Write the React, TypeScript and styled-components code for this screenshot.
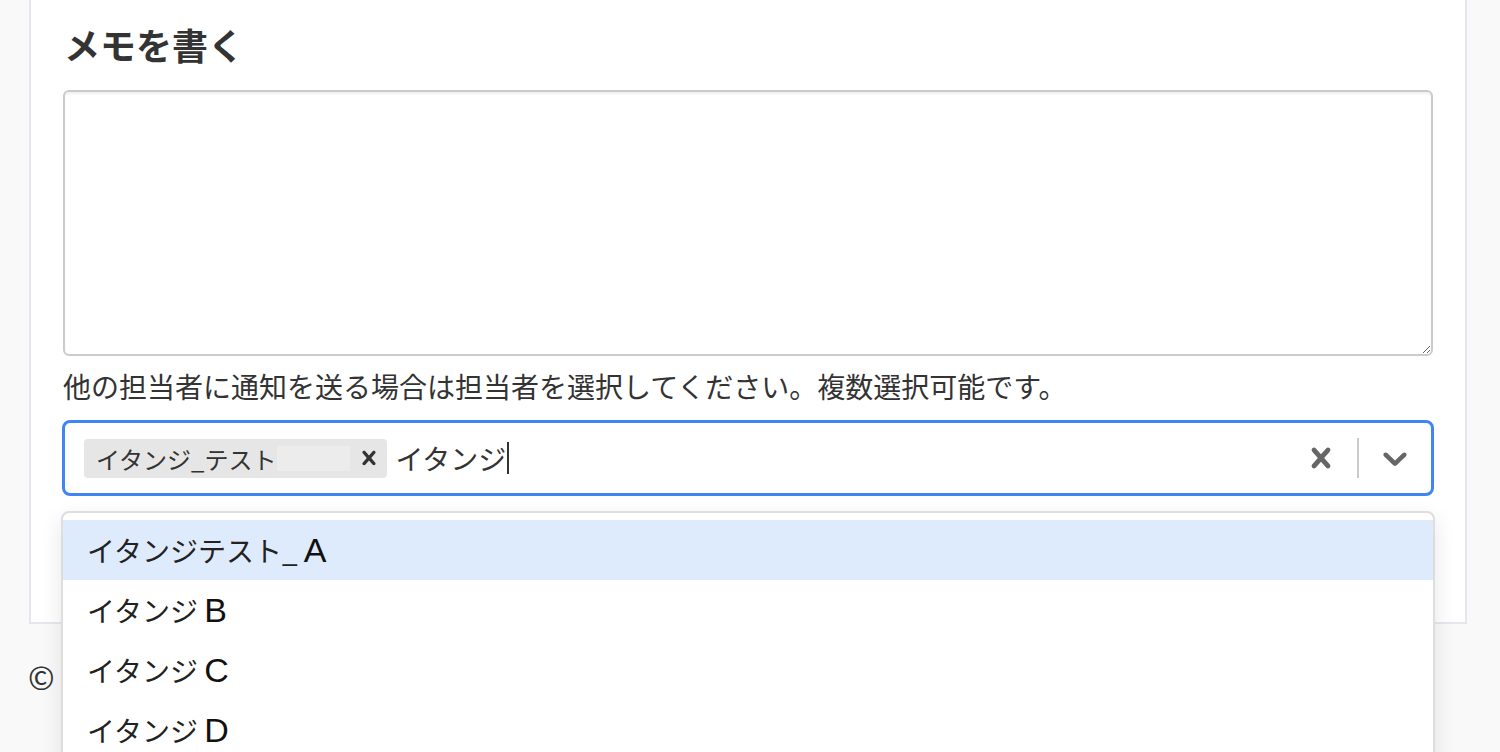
import React from "react";
import styled, { createGlobalStyle } from "styled-components";

const GlobalStyle = createGlobalStyle`
  html, body {
    margin: 0;
    padding: 0;
    background: #f9f9fa;
    font-family: "Noto Sans CJK JP", "Noto Sans", sans-serif;
    color: #333;
    overflow: hidden;
  }
`;

const Page = styled.div`
  height: 752px;
  overflow: hidden;
`;

const Card = styled.section`
  box-sizing: border-box;
  margin-left: 29px;
  width: 1438px;
  background: #fff;
  border: 2px solid #e6e6ec;
  border-top: none;
  padding: 18px 32px 126px;
`;

const Heading = styled.h2`
  margin: 0 0 20px 1px;
  font-size: 36px;
  font-weight: 700;
  line-height: 52px;
  color: #333;
`;

const MemoArea = styled.textarea`
  display: block;
  box-sizing: border-box;
  width: 100%;
  height: 266px;
  margin: 0;
  border: 2px solid #cbcbcb;
  border-radius: 6px;
  box-shadow: inset 0 2px 2px rgba(0, 0, 0, 0.06);
  resize: vertical;
  outline: none;
  font: inherit;
`;

const Hint = styled.p`
  margin: 10px 0 14px;
  font-size: 28px;
  line-height: 40px;
  color: #333;
`;

const SelectWrap = styled.div`
  position: relative;
  margin-left: -1px;
  width: 1372px;
`;

const Control = styled.div`
  box-sizing: border-box;
  display: flex;
  align-items: center;
  min-height: 76px;
  border: 3px solid #3f86f4;
  border-radius: 8px;
  background: #fff;
`;

const ValueContainer = styled.div`
  flex: 1;
  display: flex;
  align-items: center;
  gap: 8px;
  padding: 4px 15px 4px 19px;
`;

const Tag = styled.div`
  display: flex;
  align-items: center;
  height: 39px;
  border-radius: 4px;
  background: #e6e6e6;
`;

const TagLabel = styled.span`
  display: flex;
  align-items: center;
  padding-left: 12px;
  font-size: 24px;
  line-height: 39px;
  color: #333;
`;

const Masked = styled.span`
  display: inline-block;
  width: 73px;
  height: 25px;
  margin-left: 1px;
  background: #ececec;
`;

const TagRemove = styled.span`
  display: flex;
  align-items: center;
  justify-content: center;
  width: 37px;
  height: 39px;
  color: #333;
`;

const Typed = styled.span`
  display: flex;
  align-items: center;
  font-size: 28px;
  line-height: 40px;
  color: #333;
`;

const Caret = styled.span`
  display: inline-block;
  width: 2px;
  height: 32px;
  margin-left: 1px;
  background: #333;
`;

const Indicators = styled.div`
  display: flex;
  align-items: center;
  align-self: stretch;
`;

const IndicatorButton = styled.span`
  display: flex;
  align-items: center;
  justify-content: center;
  padding: 0 16px;
  color: #666;
`;

const Separator = styled.span`
  align-self: center;
  width: 2px;
  height: 40px;
  background: #cccccc;
`;

const Menu = styled.ul`
  position: absolute;
  top: calc(100% + 15px);
  left: -1px;
  right: -1px;
  z-index: 10;
  margin: 0;
  padding: 7px 0 0;
  list-style: none;
  background: #fff;
  border: 2px solid #dedede;
  border-radius: 8px;
  box-shadow: 0 8px 22px rgba(0, 0, 0, 0.1);
`;

const Option = styled.li<{ $active?: boolean }>`
  height: 60px;
  display: flex;
  align-items: center;
  padding: 0 24px;
  font-size: 28px;
  color: #222;
  white-space: pre;
  background: ${(p) => (p.$active ? "#deebfc" : "#fff")};
`;

// the trailing letter of each name is set larger, in a Latin face
const Letter = styled.span`
  font-family: "Liberation Sans", Arial, sans-serif;
  font-size: 34px;
  line-height: 1;
  color: #111;
`;

const Footer = styled.footer`
  padding: 32px 28px;
  font-size: 32px;
  line-height: 40px;
  color: #333;
`;

const CrossIcon = ({ size }: { size: number }) => (
  <svg width={size} height={size} viewBox="0 0 20 20" fill="currentColor">
    <path d="M14.348 14.849c-0.469 0.469-1.229 0.469-1.697 0l-2.651-3.030-2.651 3.029c-0.469 0.469-1.229 0.469-1.697 0-0.469-0.469-0.469-1.229 0-1.697l2.758-3.15-2.759-3.152c-0.469-0.469-0.469-1.228 0-1.697s1.228-0.469 1.697 0l2.652 3.031 2.651-3.031c0.469-0.469 1.228-0.469 1.697 0s0.469 1.229 0 1.697l-2.758 3.152 2.758 3.15c0.469 0.469 0.469 1.229 0 1.698z" />
  </svg>
);

const ChevronIcon = ({ size }: { size: number }) => (
  <svg width={size} height={size} viewBox="0 0 20 20" fill="currentColor">
    <path d="M4.516 7.548c0.436-0.446 1.043-0.481 1.576 0l3.908 3.747 3.908-3.747c0.533-0.481 1.141-0.446 1.574 0 0.436 0.445 0.408 1.197 0 1.615-0.406 0.418-4.695 4.502-4.695 4.502-0.217 0.223-0.502 0.335-0.787 0.335s-0.57-0.112-0.789-0.335c0 0-4.287-4.084-4.695-4.502s-0.436-1.17 0-1.615z" />
  </svg>
);

const OPTIONS = [
  { name: "イタンジテスト_ ", letter: "A" },
  { name: "イタンジ ", letter: "B" },
  { name: "イタンジ ", letter: "C" },
  { name: "イタンジ ", letter: "D" },
  { name: "イタンジ ", letter: "E" },
];

const App = () => {
  return (
    <Page>
      <GlobalStyle />
      <Card>
        <Heading>メモを書く</Heading>
        <MemoArea />
        <Hint>
          他の担当者に通知を送る場合は担当者を選択してください。複数選択可能です。
        </Hint>
        <SelectWrap>
          <Control>
            <ValueContainer>
              <Tag>
                <TagLabel>
                  イタンジ_テスト
                  <Masked />
                </TagLabel>
                <TagRemove>
                  <CrossIcon size={28} />
                </TagRemove>
              </Tag>
              <Typed>
                イタンジ
                <Caret />
              </Typed>
            </ValueContainer>
            <Indicators>
              <IndicatorButton>
                <CrossIcon size={40} />
              </IndicatorButton>
              <Separator />
              <IndicatorButton>
                <ChevronIcon size={40} />
              </IndicatorButton>
            </Indicators>
          </Control>
          <Menu>
            {OPTIONS.map((opt, index) => (
              <Option key={index} $active={index === 0}>
                {opt.name}
                <Letter>{opt.letter}</Letter>
              </Option>
            ))}
          </Menu>
        </SelectWrap>
      </Card>
      <Footer>©</Footer>
    </Page>
  );
};

export default App;
